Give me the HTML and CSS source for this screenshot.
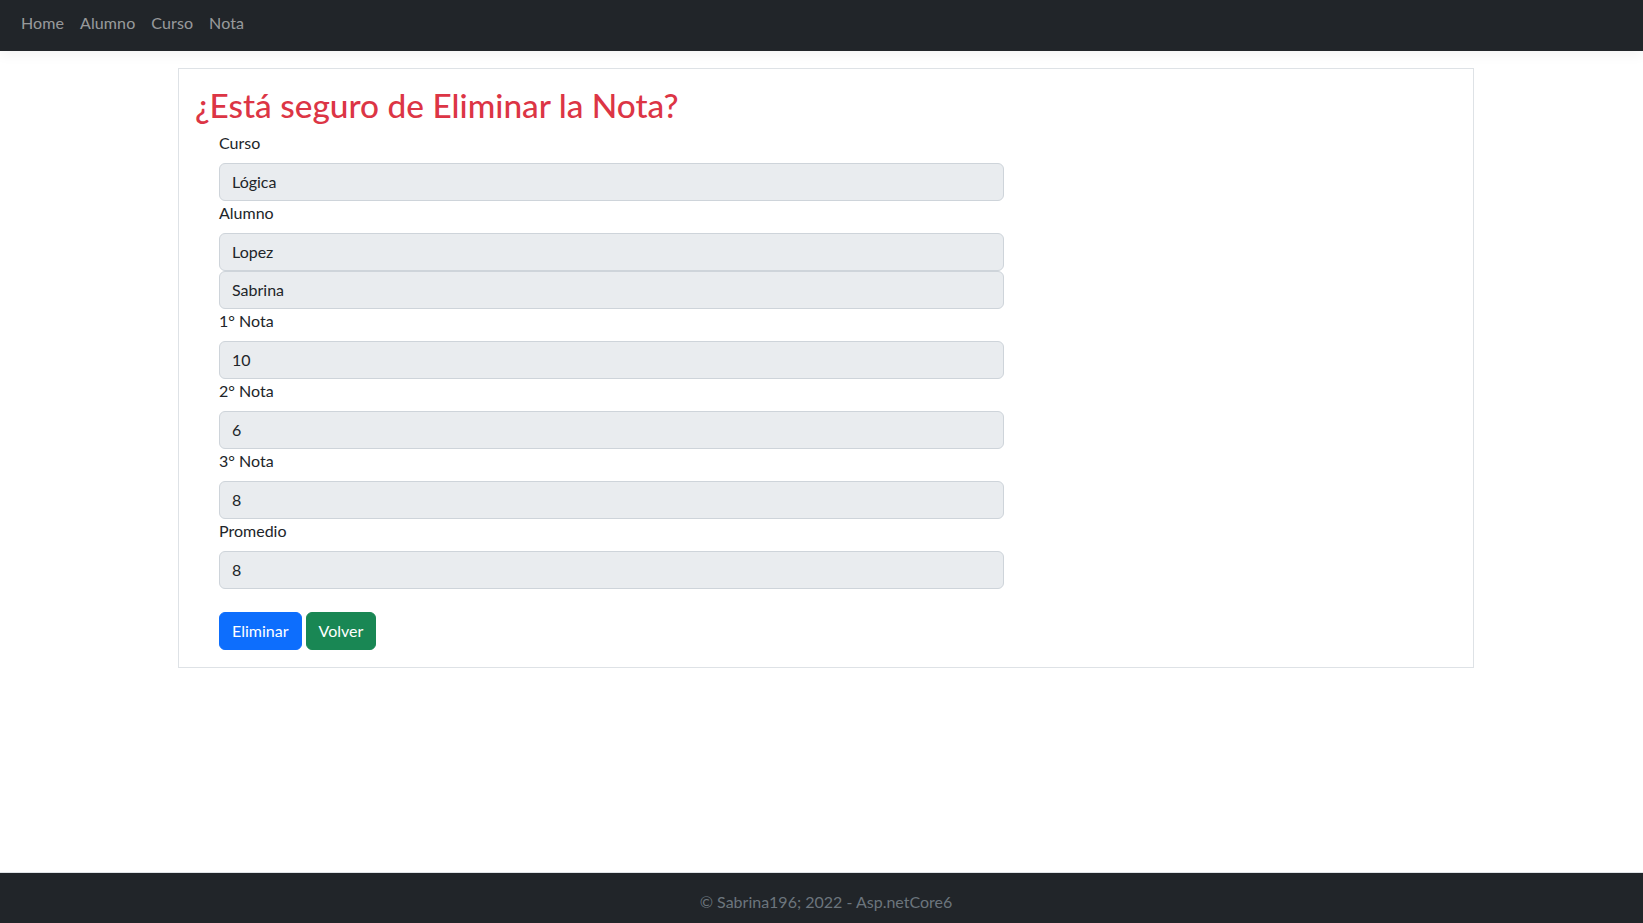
FILE: index.html
```html
<!DOCTYPE html>
<html lang="es">
<head>
<meta charset="utf-8">
<title>Eliminar Nota</title>
<link rel="stylesheet" href="styles.css">
</head>
<body>
<header class="navbar">
  <nav class="nav">
    <a class="nav-link" href="#">Home</a>
    <a class="nav-link" href="#">Alumno</a>
    <a class="nav-link" href="#">Curso</a>
    <a class="nav-link" href="#">Nota</a>
  </nav>
</header>
<main class="main">
  <div class="container">
    <div class="card">
      <h2 class="title">¿Está seguro de Eliminar la Nota?</h2>
      <form class="form">
        <div class="group">
          <label class="label">Curso</label>
          <input class="control" disabled value="Lógica">
        </div>
        <div class="group">
          <label class="label">Alumno</label>
          <input class="control" disabled value="Lopez">
          <input class="control" disabled value="Sabrina">
        </div>
        <div class="group">
          <label class="label">1° Nota</label>
          <input class="control" disabled value="10">
        </div>
        <div class="group">
          <label class="label">2° Nota</label>
          <input class="control" disabled value="6">
        </div>
        <div class="group">
          <label class="label">3° Nota</label>
          <input class="control" disabled value="8">
        </div>
        <div class="group">
          <label class="label">Promedio</label>
          <input class="control" disabled value="8">
        </div>
        <div class="actions">
          <button type="button" class="btn btn-primary">Eliminar</button>
          <button type="button" class="btn btn-success">Volver</button>
        </div>
      </form>
    </div>
  </div>
</main>
<footer class="footer">
  <div class="footer-inner">© Sabrina196; 2022 - Asp.netCore6</div>
</footer>
</body>
</html>
```
FILE: styles.css
```css
* { box-sizing: border-box; }
html, body { height: 100%; }
body {
  margin: 0;
  font-family: "Lato", "Noto Sans", sans-serif;
  font-size: 16px;
  line-height: 1.5;
  color: #212529;
  background: #fff;
  display: flex;
  flex-direction: column;
  overflow: hidden;
}
.navbar {
  height: 51px;
  flex: 0 0 51px;
  background: #212529;
  display: flex;
  align-items: center;
  padding: 0 13px;
  box-shadow: 0 4px 12px rgba(0,0,0,.05);
  position: relative;
  z-index: 1;
}
.nav { display: flex; }
.nav-link {
  color: rgba(255,255,255,.55);
  text-decoration: none;
  padding: 0 8px;
  line-height: 24px;
  margin-top: -5px;
  letter-spacing: 0.1px;
}
.main { flex: 1 1 auto; }
.container {
  width: 1296px;
  margin: 17px 0 0 178px;
}
.card {
  border: 1px solid #dee2e6;
  padding: 16px 16px 17px;
}
.title {
  margin: 0 0 8px;
  font-size: 33.4px;
  line-height: 38px;
  font-weight: 500;
  color: #dc3545;
  position: relative;
  top: 1px;
}
.form {
  width: 785px;
  margin-left: 24px;
}
.label {
  display: block;
  margin-bottom: 8px;
}
.control {
  display: block;
  width: 100%;
  height: 38px;
  padding: 5px 12px 7px;
  font: inherit;
  color: #212529;
  -webkit-text-fill-color: #212529;
  background: #e9ecef;
  border: 1px solid #ced4da;
  border-radius: 6px;
  opacity: 1;
  margin: 0;
}
.actions {
  margin-top: 23px;
  display: flex;
  gap: 4px;
}
.btn {
  height: 38px;
  padding: 6px 12px;
  font: inherit;
  color: #fff;
  border: 1px solid transparent;
  border-radius: 6px;
  cursor: pointer;
}
.btn-primary { background: #0d6efd; border-color: #0d6efd; }
.btn-success { background: #198754; border-color: #198754; }
.footer {
  flex: 0 0 51px;
  height: 51px;
  overflow: hidden;
  background: #212529;
  border-top: 1px solid #dee2e6;
  color: #6c757d;
  line-height: 60px;
  white-space: nowrap;
}
.footer-inner {
  width: 1296px;
  margin-left: 178px;
  margin-top: -1px;
  text-align: center;
}
```
